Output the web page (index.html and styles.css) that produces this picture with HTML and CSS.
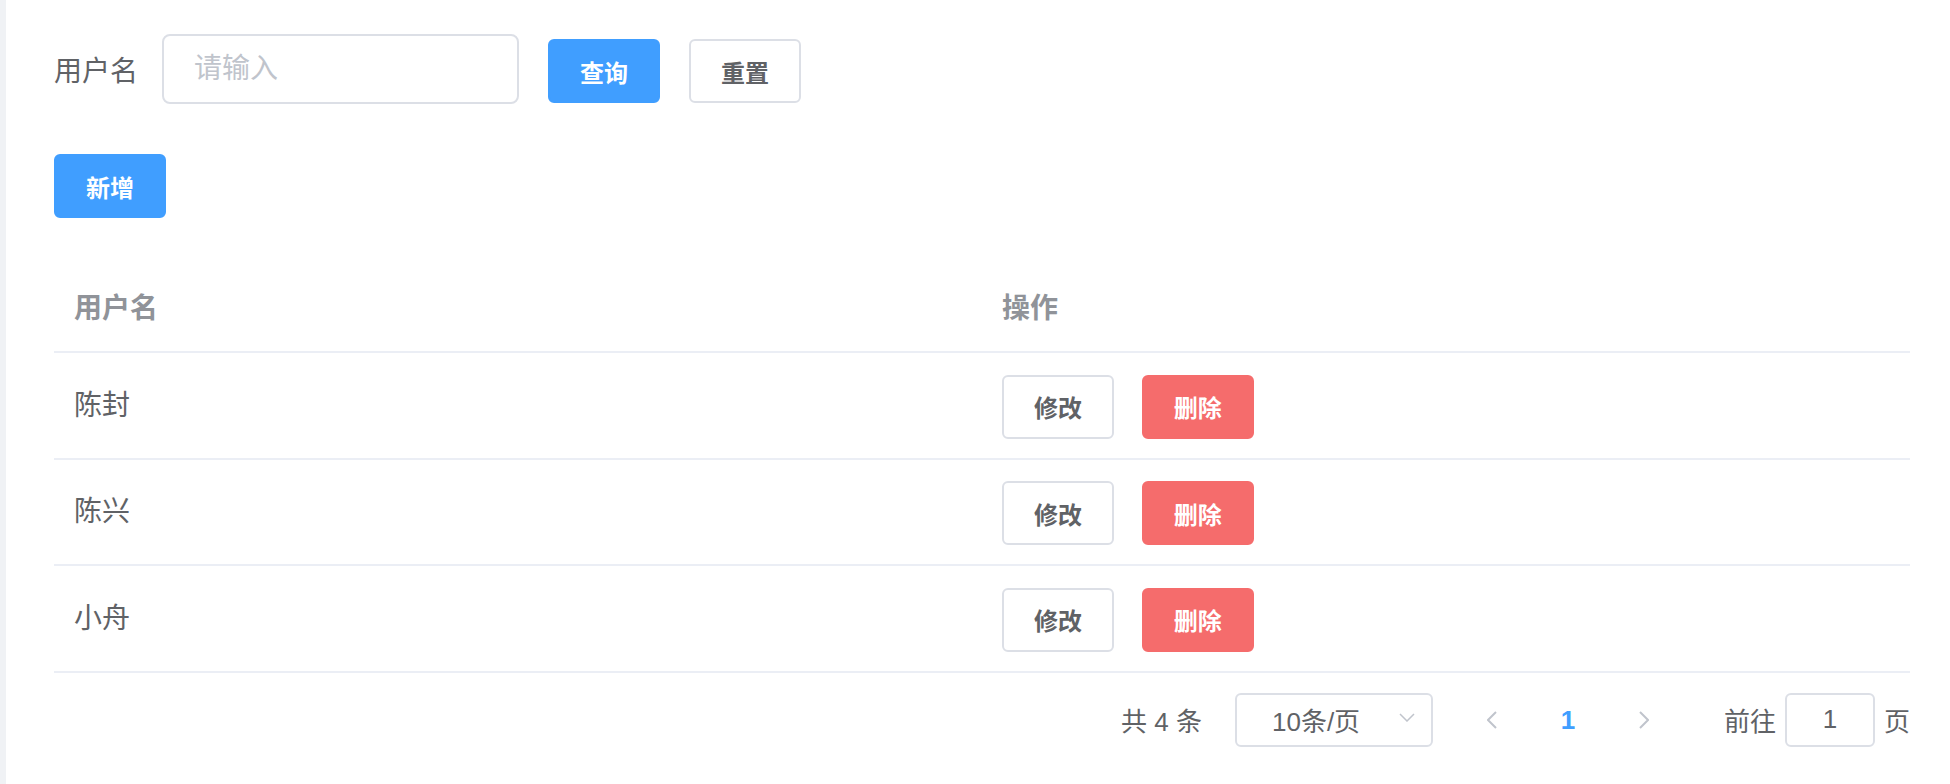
FILE: index.html
```html
<!DOCTYPE html>
<html lang="zh-CN">
<head>
    <meta charset="UTF-8">
    <meta name="viewport" content="width=device-width, initial-scale=1.0">
    <title>用户管理</title>
    <link rel="stylesheet" href="styles.css">
</head>
<body>
    <div class="layout">
        <div class="aside"></div>
        <div class="main">
            <form class="search-form">
                <label class="form-label">用户名</label>
                <input class="form-input" type="text" placeholder="请输入">
                <button type="button" class="btn btn-primary">查询</button>
                <button type="button" class="btn btn-default">重置</button>
            </form>

            <div class="toolbar">
                <button type="button" class="btn btn-primary">新增</button>
            </div>

            <table class="user-table">
                <thead>
                    <tr>
                        <th>用户名</th>
                        <th>操作</th>
                    </tr>
                </thead>
                <tbody>
                    <tr>
                        <td>陈封</td>
                        <td>
                            <button type="button" class="btn btn-default">修改</button>
                            <button type="button" class="btn btn-danger">删除</button>
                        </td>
                    </tr>
                    <tr>
                        <td>陈兴</td>
                        <td>
                            <button type="button" class="btn btn-default">修改</button>
                            <button type="button" class="btn btn-danger">删除</button>
                        </td>
                    </tr>
                    <tr>
                        <td>小舟</td>
                        <td>
                            <button type="button" class="btn btn-default">修改</button>
                            <button type="button" class="btn btn-danger">删除</button>
                        </td>
                    </tr>
                </tbody>
            </table>

            <div class="pagination">
                <span class="total">共 4 条</span>
                <div class="sizes">
                    <span>10条/页</span>
                    <svg class="arrow-down" width="16" height="9" viewBox="0 0 16 9">
                        <polyline points="1,1 8,8 15,1" fill="none" stroke="#c0c4cc" stroke-width="1.5"/>
                    </svg>
                </div>
                <button type="button" class="page-btn" disabled>
                    <svg width="10" height="18" viewBox="0 0 10 18">
                        <polyline points="9,1 1,9 9,17" fill="none" stroke="#c0c4cc" stroke-width="2"/>
                    </svg>
                </button>
                <ul class="pager">
                    <li class="active">1</li>
                </ul>
                <button type="button" class="page-btn" disabled>
                    <svg width="10" height="18" viewBox="0 0 10 18">
                        <polyline points="1,1 9,9 1,17" fill="none" stroke="#c0c4cc" stroke-width="2"/>
                    </svg>
                </button>
                <span class="jumper">
                    前往
                    <input class="jumper-input" type="text" value="1">
                    页
                </span>
            </div>
        </div>
    </div>
</body>
</html>
```

FILE: styles.css
```css
body {
    margin: 0;
    font-family: "Liberation Sans", "Noto Sans CJK SC", sans-serif;
    color: #606266;
    background: #fff;
}
.layout {
    display: flex;
    min-height: 784px;
}
.aside {
    width: 6px;
    background-color: #f0f2f5;
    flex-shrink: 0;
}
.main {
    flex: 1;
    padding: 34px 40px 0 48px;
}
.search-form {
    display: flex;
    align-items: center;
    margin: 0;
    height: 70px;
}
.form-label {
    font-size: 28px;
    margin-right: 24px;
}
.form-input {
    box-sizing: border-box;
    width: 357px;
    height: 70px;
    padding: 0 30px;
    font-size: 28px;
    font-family: inherit;
    color: #606266;
    border: 2px solid #dcdfe6;
    border-radius: 8px;
    outline: none;
    margin-right: 29px;
}
.form-input::placeholder {
    color: #c0c4cc;
}
.btn {
    box-sizing: border-box;
    width: 112px;
    height: 64px;
    font-size: 24px;
    font-family: inherit;
    font-weight: 700;
    border-radius: 6px;
    border: 2px solid #dcdfe6;
    cursor: pointer;
    padding: 0;
}
.btn-primary {
    background-color: #409eff;
    border-color: #409eff;
    color: #fff;
}
.btn-default {
    background-color: #fff;
    color: #606266;
}
.btn-danger {
    background-color: #f56c6c;
    border-color: #f56c6c;
    color: #fff;
}
.search-form .btn {
    margin-top: 4px;
}
.search-form .btn-primary {
    margin-right: 29px;
}
.toolbar {
    margin-top: 50px;
    height: 64px;
}
.user-table {
    width: 100%;
    margin-top: 48px;
    border-collapse: collapse;
    table-layout: fixed;
}
.user-table th,
.user-table td {
    text-align: left;
    font-size: 28px;
    line-height: 46px;
    padding: 20px;
    border-bottom: 2px solid #ebeef5;
    vertical-align: middle;
}
.user-table th {
    color: #909399;
    font-weight: 700;
    padding-bottom: 19px;
}
.user-table td {
    line-height: 64px;
    padding-top: 20px;
    padding-bottom: 19px;
}
.user-table td .btn {
    vertical-align: middle;
}
.user-table td .btn-danger {
    margin-left: 20px;
}
.pagination {
    display: flex;
    justify-content: flex-end;
    align-items: center;
    margin-top: 20px;
    height: 54px;
    font-size: 26px;
}
.total {
    margin-right: 33px;
}
.sizes {
    box-sizing: border-box;
    width: 198px;
    height: 54px;
    border: 2px solid #dcdfe6;
    border-radius: 6px;
    display: flex;
    align-items: center;
    justify-content: space-between;
    padding: 0 16px 0 35px;
    margin-right: 24px;
}
.arrow-down {
    margin-bottom: 4px;
}
.page-btn {
    width: 70px;
    height: 54px;
    border: none;
    background: transparent;
    padding: 0;
    display: flex;
    align-items: center;
    justify-content: center;
}
.pager {
    list-style: none;
    margin: 0 6px;
    padding: 0;
}
.pager li {
    width: 70px;
    text-align: center;
    line-height: 54px;
}
.pager li.active {
    color: #409eff;
    font-weight: 700;
}
.jumper {
    display: flex;
    align-items: center;
    margin-left: 45px;
}
.jumper-input {
    box-sizing: border-box;
    width: 90px;
    height: 54px;
    margin: 0 9px;
    border: 2px solid #dcdfe6;
    border-radius: 6px;
    text-align: center;
    font-size: 26px;
    font-family: inherit;
    color: #606266;
    outline: none;
}
```
